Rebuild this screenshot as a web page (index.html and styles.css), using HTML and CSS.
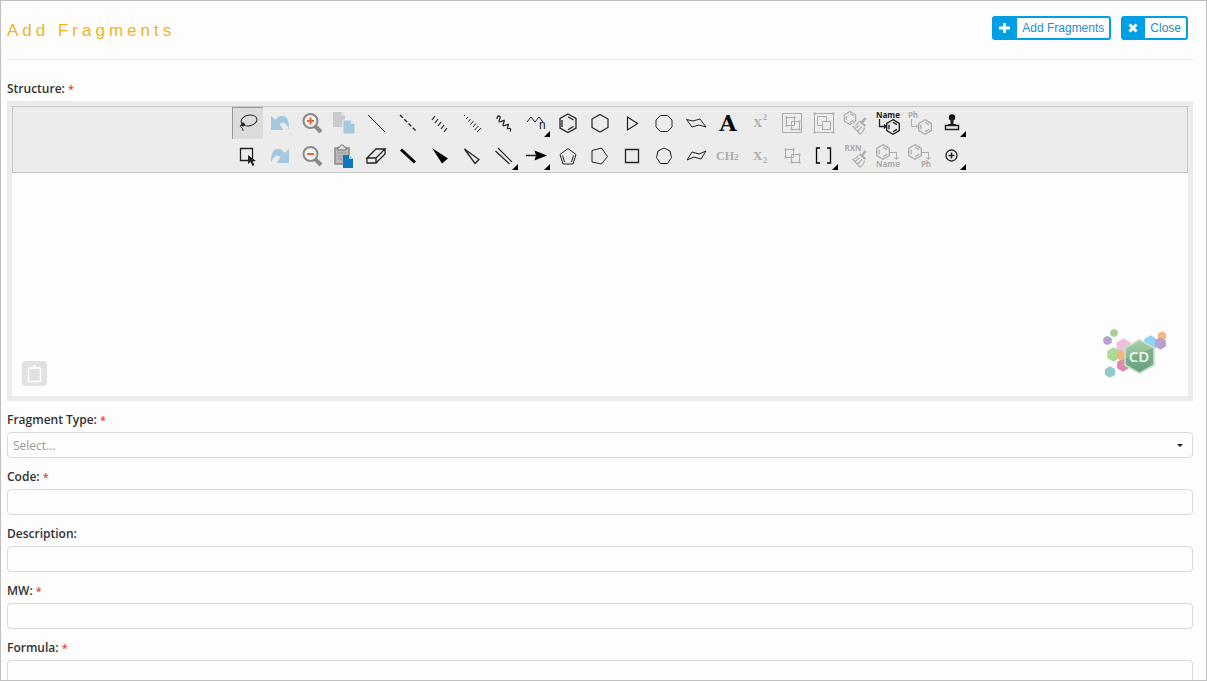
FILE: index.html
```html
<!DOCTYPE html>
<html lang="en">
<head>
<meta charset="utf-8">
<title>Add Fragments</title>
<link rel="stylesheet" href="styles.css">
</head>
<body>
<svg class="defs" aria-hidden="true">
  <symbol id="hex" viewBox="-10 -10 20 20"><path d="M0-9.6 8.3-4.8V4.8L0 9.6-8.3 4.8V-4.8Z"/></symbol>
  <symbol id="flag" viewBox="0 0 32 33"><path d="M30 24v6h-6z" fill="#000" stroke="none"/></symbol>
  <symbol id="ring" viewBox="-8 -8 16 16"><path d="M0-6.5 5.6-3.2V3.2L0 6.5-5.6 3.2V-3.2ZM0-4.2 3.6-2.1M3.6 2.1 0 4.2M-3.6-2.1V2.1" fill="none" stroke="currentColor" stroke-width="1.2"/></symbol>
  <symbol id="broom" viewBox="0 0 15 18"><path d="M13.500 1 10 5.500" stroke="currentColor" stroke-width="2.500"/><path d="M7.500 4 13.500 9" stroke="currentColor" stroke-width="2"/><path d="M6.500 5.500C5 8 3 9 .8 9.500L8 17C10.500 15.500 12 13.500 12.500 10.500M3 11.500 7.500 8M5.500 14.300 10 9.500" fill="none" stroke="currentColor" stroke-width="1.200"/></symbol>
</svg>
<main class="page">
  <header class="page-header">
    <h1 class="title">Add Fragments</h1>
    <div class="actions">
      <button class="action" type="button"><span class="action-icon"><svg width="11" height="10" viewBox="0 0 11 10"><path d="M5.500 0v10M0 5h11" stroke="#fff" stroke-width="3"/></svg></span><span class="action-text">Add Fragments</span></button>
      <button class="action" type="button"><span class="action-icon"><svg width="10" height="10" viewBox="0 0 10 10"><path d="M1.500 1.500l7 7M8.500 1.500l-7 7" stroke="#fff" stroke-width="3"/></svg></span><span class="action-text">Close</span></button>
    </div>
  </header>

  <section class="field">
    <h2 class="label">Structure: <span class="req">*</span></h2>
    <div class="editor">
      <div class="toolbar">
        <div class="tools">
          <button class="tool active" type="button" aria-label="Lasso"><svg viewBox="0 0 32 33"><ellipse cx="17" cy="13.500" rx="8" ry="5.300" transform="rotate(-12 17 13.500)"/><path d="M12 17c-2 2-4 1-4 2s3 1 3 5"/><circle cx="11" cy="17.500" r="1.500" fill="#222"/></svg></button>
          <button class="tool" type="button" aria-label="Undo"><svg viewBox="0 0 32 33"><path class="soft" d="M7 9 11.500 13C16 6 26 7 25 23 23 16 19 14 15.500 17L19.500 23H7Z"/></svg></button>
          <button class="tool" type="button" aria-label="Zoom in"><svg viewBox="0 0 32 33"><path d="M19 19l6 6" stroke="#8a8a8a" stroke-width="4"/><circle cx="14.500" cy="14" r="7" fill="#f3f3f3" stroke="#8a8a8a" stroke-width="2"/><path d="M14.500 10.500v7M11 14h7" stroke="#f26522" stroke-width="2"/></svg></button>
          <button class="tool" type="button" aria-label="Copy"><svg viewBox="0 0 32 33"><path d="M5 5h9l3 3v12H5z" fill="#c9cacc" stroke="none"/><path d="M14 5v3h3" stroke="#eee"/><path d="M15 13h8l4 4v10H15z" fill="#a4c8de" stroke="#ececec"/><path d="M23 13v4h4z" fill="#d5e6f0" stroke="none"/></svg></button>
          <button class="tool" type="button" aria-label="Single bond"><svg viewBox="0 0 32 33"><path d="M8 8l17 17"/></svg></button>
          <button class="tool" type="button" aria-label="Dashed bond"><svg viewBox="0 0 32 33"><path d="M8 8l16 16" stroke-dasharray="4 2" stroke-width="1.300"/></svg></button>
          <button class="tool" type="button" aria-label="Hashed bond"><svg viewBox="0 0 32 33"><path d="M8 13l3-4M11 16l3-4M14 19l3-4M17 22l3-4M20 25l3-4" stroke-width="1.200"/></svg></button>
          <button class="tool" type="button" aria-label="Hashed wedge"><svg viewBox="0 0 32 33"><path d="M8 9l1-1M10 12l2-2M12.500 14.500l2-2.500M14.500 17.500l3-3.500M17 20l3-3.500M18.500 23l4-4M21 25l4-4"/></svg></button>
          <button class="tool" type="button" aria-label="Wavy bond"><svg viewBox="0 0 32 33"><path d="M9 12C9 8 13 8 12 11S10 15.500 13 14.500 17 12 16 15 14 19.500 17 18.500 21 16 20 19 19 22 21 21.500 23 22.500 22 24.500" stroke-width="1.200"/></svg></button>
          <button class="tool" type="button" aria-label="Chain"><svg viewBox="0 0 32 33"><path d="M7 15l4-5 4 5 4-5 4 5"/><text x="19" y="22" class="t-chain">n</text><use href="#flag"/></svg></button>
          <button class="tool" type="button" aria-label="Benzene"><svg viewBox="0 0 32 33"><path d="M16 7l8 4.500v9.500l-8 4.500-8-4.500v-9.500ZM10 13v7M16 9.800l5.500 3.200M21.500 19.500l-5.500 3.200" stroke-width="1.300"/></svg></button>
          <button class="tool" type="button" aria-label="Cyclohexane"><svg viewBox="0 0 32 33"><path d="M16 7.500l8 4.500v8.500L16 25l-8-4.500V12Z" stroke-width="1.200"/></svg></button>
          <button class="tool" type="button" aria-label="Cyclopropane"><svg viewBox="0 0 32 33"><path d="M11.500 10v13l10-6.500Z" stroke-width="1.200"/></svg></button>
          <button class="tool" type="button" aria-label="Cyclooctane"><svg viewBox="0 0 32 33"><path d="M12.500 8.500h7l4.500 4.500v7l-4.500 4.500h-7L8 20v-7Z"/></svg></button>
          <button class="tool" type="button" aria-label="Chair left"><svg viewBox="0 0 32 33"><path d="M6.500 12.500L13 14l7-2 6 8-7-2-7 2Z"/></svg></button>
          <button class="tool" type="button" aria-label="Text"><svg viewBox="0 0 32 33"><text x="16" y="24" class="t-big">A</text></svg></button>
          <button class="tool" type="button" aria-label="Superscript" disabled><svg viewBox="0 0 32 33"><text x="9" y="20" class="t-serif">X</text><text x="19" y="13" class="t-small">2</text></svg></button>
          <button class="tool" type="button" aria-label="Group with frame" disabled><svg viewBox="0 0 32 33"><path d="M6.500 6.500h19v19h-19zM10.500 10.500h8v8h-8zM15.500 14.500h8v8h-8z"/><path class="dots" d="M10.500 10.500h0M18.500 10.500h0M10.500 18.500h0M23.500 14.500h0M15.500 22.500h0M23.500 22.500h0"/></svg></button>
          <button class="tool" type="button" aria-label="Ungroup" disabled><svg viewBox="0 0 32 33"><path d="M6.500 6.500h19v19h-19zM9.500 9.500h9v9h-9z"/><path d="M14.500 14.500h8v8h-8z" fill="#ececec"/><path class="dots" d="M6.500 6.500h0M25.500 6.500h0M6.500 25.500h0M25.500 25.500h0"/></svg></button>
          <button class="tool" type="button" aria-label="Clean structure" disabled><svg viewBox="0 0 32 33"><use href="#ring" x="2" y="3" width="16" height="16"/><use href="#broom" x="12" y="10" width="15" height="18"/></svg></button>
          <button class="tool" type="button" aria-label="Name to structure"><svg viewBox="0 0 32 33"><text x="16" y="11" class="t-word">Name</text><path d="M7.500 12v7.500h6M12 17.500l2 2-2 2" stroke-width="1.300"/><use href="#ring" x="12" y="11" width="18" height="18"/></svg></button>
          <button class="tool" type="button" aria-label="Expand label" disabled><svg viewBox="0 0 32 33"><text x="9" y="11" class="t-word">Ph</text><path d="M7.500 12v7.500h6M12 17.500l2 2-2 2"/><use href="#ring" x="12" y="11" width="18" height="18"/></svg></button>
          <button class="tool" type="button" aria-label="Stamp"><svg viewBox="0 0 32 33"><circle cx="16" cy="10.500" r="3.200" fill="#111" stroke="none"/><path d="M16 11v7" stroke-width="3"/><path d="M9.500 18.500h13v4h-13z" stroke-width="1.500"/><path d="M12 18h8" stroke-width="2"/><use href="#flag"/></svg></button>

          <button class="tool" type="button" aria-label="Rectangle select"><svg viewBox="0 0 32 33"><path d="M8.500 8.500h12v12h-12z" stroke-width="1.300"/><path d="M16 15v9l2.500-2 2 4 2-1-2-3.500 3.500-.500Z" fill="#222" stroke="none"/></svg></button>
          <button class="tool" type="button" aria-label="Redo"><svg viewBox="0 0 32 33"><path class="soft" d="M25 9 20.500 13C16 6 6 7 7 23 9 16 13 14 16.500 17L12.500 23H25Z"/></svg></button>
          <button class="tool" type="button" aria-label="Zoom out"><svg viewBox="0 0 32 33"><path d="M19 19l6 6" stroke="#8a8a8a" stroke-width="4"/><circle cx="14.500" cy="14" r="7" fill="#f3f3f3" stroke="#8a8a8a" stroke-width="2"/><path d="M11 14h7" stroke="#f26522" stroke-width="2"/></svg></button>
          <button class="tool" type="button" aria-label="Paste"><svg viewBox="0 0 32 33"><path d="M7 8h14v16H7z" fill="#b9b9b9" stroke="#888" stroke-width="1.500"/><path d="M10 7h2c0-3 4-3 4 0h2v3h-8z" fill="#ddd" stroke="#777"/><path d="M9.500 13h9M9.500 16h6M9.500 19h5" stroke="#999"/><path d="M15 15h6l4 4v9H15z" fill="#0b78bf" stroke="none"/><path d="M21 15v4h4z" fill="#9fd0ee" stroke="none"/></svg></button>
          <button class="tool" type="button" aria-label="Eraser"><svg viewBox="0 0 32 33"><path d="M7 18l9-9h9l-9 9ZM7 18v5h9v-5M16 23l9-9V9" stroke-width="1.300"/></svg></button>
          <button class="tool" type="button" aria-label="Bold bond"><svg viewBox="0 0 32 33"><path d="M9 9.500l14 13" stroke="#000" stroke-width="3"/></svg></button>
          <button class="tool" type="button" aria-label="Wedge bond"><svg viewBox="0 0 32 33"><path d="M8 8l10 15.500 6-5Z" fill="#000" stroke="none"/></svg></button>
          <button class="tool" type="button" aria-label="Hollow wedge"><svg viewBox="0 0 32 33"><path d="M8.500 9l10.500 14.500 4-4Z" stroke-width="1.300"/></svg></button>
          <button class="tool" type="button" aria-label="Double bond"><svg viewBox="0 0 32 33"><path d="M7.500 11l14 13M10 8l14 14" stroke-width="1.200"/><use href="#flag"/></svg></button>
          <button class="tool" type="button" aria-label="Arrow"><svg viewBox="0 0 32 33"><path d="M6 15.500h12" stroke-width="1.500"/><path d="M14.500 10.500 27 15.500l-12.500 5 1.500-5Z" fill="#000" stroke="none"/><use href="#flag"/></svg></button>
          <button class="tool" type="button" aria-label="Cyclopentadiene"><svg viewBox="0 0 32 33"><path d="M16 8.500l8 6-3 9.500H11L8 14.500ZM10.500 15.500l2 6.500M21.500 15.500l-2 6.500"/></svg></button>
          <button class="tool" type="button" aria-label="Cyclopentane"><svg viewBox="0 0 32 33"><path d="M8 10.500l9.500-2.500 6 8.500-6 7.500L8 22Z"/></svg></button>
          <button class="tool" type="button" aria-label="Cyclobutane"><svg viewBox="0 0 32 33"><path d="M9.500 9.500h13v13h-13z" stroke-width="1.300"/></svg></button>
          <button class="tool" type="button" aria-label="Cycloheptane"><svg viewBox="0 0 32 33"><path d="M16 8l6 3 1.500 6.500-4 6h-7l-4-6L10 11Z"/></svg></button>
          <button class="tool" type="button" aria-label="Chair right"><svg viewBox="0 0 32 33"><path d="M7 20l5-8 7 2 7-3-5 8-7-2Z"/></svg></button>
          <button class="tool" type="button" aria-label="Formula text" disabled><svg viewBox="0 0 32 33"><text x="4" y="20" class="t-formula">CH</text><text x="22" y="20" class="t-sub">2</text></svg></button>
          <button class="tool" type="button" aria-label="Subscript" disabled><svg viewBox="0 0 32 33"><text x="9" y="20" class="t-serif">X</text><text x="19" y="23" class="t-small">2</text></svg></button>
          <button class="tool" type="button" aria-label="Group" disabled><svg viewBox="0 0 32 33"><path d="M9.500 9.500h8v8h-8zM15.500 14.500h8v8h-8z"/><path class="dots" d="M9.500 9.500h0M17.500 9.500h0M9.500 17.500h0M23.500 14.500h0M15.500 22.500h0M23.500 22.500h0"/></svg></button>
          <button class="tool" type="button" aria-label="Brackets"><svg viewBox="0 0 32 33"><path d="M12 8H8.500v15H12M19 8h3.500v15H19" stroke="#000" stroke-width="1.300"/><use href="#flag"/></svg></button>
          <button class="tool" type="button" aria-label="Clean reaction" disabled><svg viewBox="0 0 32 33"><text x="13" y="11" class="t-word">RXN</text><use href="#broom" x="12" y="10" width="15" height="18"/></svg></button>
          <button class="tool" type="button" aria-label="Structure to name" disabled><svg viewBox="0 0 32 33"><use href="#ring" x="2" y="3" width="18" height="18"/><path d="M18 12.500h6.500V19M22.500 17.500l2 2 2-2"/><text x="16" y="27" class="t-word">Name</text></svg></button>
          <button class="tool" type="button" aria-label="Contract label" disabled><svg viewBox="0 0 32 33"><use href="#ring" x="2" y="3" width="18" height="18"/><path d="M18 12.500h6.500V19M22.500 17.500l2 2 2-2"/><text x="22" y="27" class="t-word">Ph</text></svg></button>
          <button class="tool" type="button" aria-label="Charge"><svg viewBox="0 0 32 33"><circle cx="15.500" cy="15.500" r="5.500" stroke-width="1.300"/><path d="M12.500 15.500h6M15.500 12.500v6" stroke-width="1.500"/><use href="#flag"/></svg></button>
        </div>
      </div>
      <div class="canvas">
        <button class="clip" type="button" aria-label="Clipboard"><svg width="25" height="25" viewBox="0 0 25 25"><path d="M6.500 7h12v13.500h-12z" fill="none" stroke="#fdfdfd" stroke-width="1.500" stroke-linejoin="round"/><path d="M9 8V6h2c0-2.500 3-2.500 3 0h2v2z" fill="#fdfdfd"/></svg></button>
        <svg class="logo" width="66" height="50" viewBox="0 0 66 50" role="img" aria-label="CD">
          <defs><linearGradient id="g" x1="0" y1="0" x2="0" y2="1"><stop offset="0" stop-color="#a5cfa6"/><stop offset="1" stop-color="#72a886"/></linearGradient></defs>
          <g stroke-linejoin="round" stroke-width="2">
          <use href="#hex" x="8" y="0" width="8" height="8" fill="#a3cf95" stroke="#a3cf95"/>
          <use href="#hex" x="1" y="7" width="9" height="9" fill="#b8a3cf" stroke="#b8a3cf"/>
          <use href="#hex" x="13" y="9" width="17" height="17" fill="#eec0d8"/>
          <use href="#hex" x="4" y="18" width="15" height="15" fill="#a9dc98"/>
          <use href="#hex" x="14" y="29" width="14" height="14" fill="#df86b3"/>
          <use href="#hex" x="14" y="21" width="11" height="11" fill="#f5b57a"/>
          <use href="#hex" x="2" y="37" width="12" height="12" fill="#92cbcb"/>
          <path d="M49 9 57 13 53 20 46 18Z" fill="#91d2f0"/>
          <use href="#hex" x="41" y="6" width="15" height="15" fill="#91d2f0"/>
          <use href="#hex" x="55" y="2" width="10" height="10" fill="#f6b880"/>
          <use href="#hex" x="52" y="8" width="13" height="13" fill="#b9a0cc"/>
          </g>
          <use href="#hex" x="19" y="9" width="37" height="37" fill="#c8dfce"/>
          <use href="#hex" x="21" y="11" width="33" height="33" fill="url(#g)"/>
          <path d="M24 30l27-11v16l-13 8-13-7z" fill="#609575" opacity=".4"/>
          <text x="37" y="33" class="t-logo">CD</text>
        </svg>
      </div>
    </div>
  </section>

  <div class="field">
    <label class="label" for="type">Fragment Type: <span class="req">*</span></label>
    <div class="select-wrap">
      <select class="control select" id="type"><option>Select...</option></select>
      <svg class="caret" width="6" height="3" viewBox="0 0 6 3"><path d="M0 0h6L3 3z" fill="#222"/></svg>
    </div>
  </div>
  <div class="field">
    <label class="label" for="code">Code: <span class="req">*</span></label>
    <input class="control" id="code" type="text">
  </div>
  <div class="field">
    <label class="label" for="description">Description:</label>
    <input class="control" id="description" type="text">
  </div>
  <div class="field">
    <label class="label" for="mw">MW: <span class="req">*</span></label>
    <input class="control" id="mw" type="text">
  </div>
  <div class="field">
    <label class="label" for="formula">Formula: <span class="req">*</span></label>
    <input class="control" id="formula" type="text">
  </div>
</main>
</body>
</html>
```
FILE: styles.css
```css
* { box-sizing: border-box; }
body {
  margin: 0;
  background: #fdfdfd;
  color: #333;
  font-family: "Open Sans", "Noto Sans", sans-serif;
  font-size: 12px;
}
button { font: inherit; padding: 0; margin: 0; cursor: pointer; }
.defs { position: absolute; width: 0; height: 0; }
.page {
  height: 100vh;
  overflow: hidden;
  border: 1px solid #bfbfbf;
  padding: 0 13px 0 6px;
}
.page-header {
  display: flex;
  justify-content: space-between;
  align-items: flex-start;
  padding: 15px 5px 18px 0;
  margin-bottom: 10px;
  border-bottom: 1px solid #e9e9e9;
}
.title {
  margin: 0;
  color: #efb41f;
  font: 400 17px/25px "Liberation Sans", Arial, sans-serif;
  letter-spacing: 4px;
  padding-top: 2px;
  height: 25px;
}
.actions { display: flex; gap: 10px; }
.action {
  display: flex;
  height: 24px;
  border: 2px solid #009fe3;
  border-radius: 3px;
  background: #fdfdfd;
  color: #1f8fd6;
  font: 12px/20px "Liberation Sans", Arial, sans-serif;
}
.action-icon {
  display: flex;
  align-items: center;
  height: 20px;
  padding: 0 7px 0 5px;
  background: #009fe3;
}
.action-text { padding: 0 5px; }

.field { display: flex; flex-direction: column; }
.label {
  margin: 0;
  padding: 10px 0 3px;
  font-size: 12px;
  line-height: 18px;
  font-weight: 600;
}
.req { color: #e8403a; font-size: 11px; }
.control {
  width: 100%;
  height: 26px;
  padding: 0 5px;
  border: 1px solid #d9d9d9;
  border-radius: 4px;
  background: #fdfdfd;
  font: inherit;
  color: #333;
}
.select-wrap { position: relative; display: flex; }
.select { appearance: none; color: #999; }
.caret { position: absolute; right: 10px; top: 12px; pointer-events: none; }

.editor { border: 5px solid #ececec; }
.toolbar {
  display: flex;
  justify-content: center;
  background: #ececec;
  border: 1px solid #c8c8c8;
}
.tools {
  display: grid;
  grid-template-columns: repeat(23, 32px);
  grid-template-rows: 33px 32px;
}
.tool {
  display: flex;
  border: 0;
  background: none;
  color: #222;
}
.tool.active {
  width: 31px;
  height: 32px;
  background: #dcdcdc;
  box-shadow: inset 1px 1px 0 #999;
}
.tool:disabled { color: #adadad; }
.tool svg {
  width: 32px;
  height: 33px;
  flex: none;
  fill: none;
  stroke: currentColor;
  stroke-width: 1;
}
.tool .soft { fill: #a4c8de; stroke: none; }
.tool .dots { stroke-width: 2; stroke-linecap: square; }
.tool text { fill: currentColor; stroke: none; }
.tool .t-big { fill: #000; }
.t-chain { font: 12px "Liberation Sans", sans-serif; }
.t-big { font: bold 22px "DejaVu Serif", serif; text-anchor: middle; }
.t-serif { font: bold 13px "Liberation Serif", serif; }
.t-formula { font: bold 12px "Liberation Serif", serif; }
.t-sub { font: bold 9px "Liberation Serif", serif; }
.t-small { font: bold 8px "Liberation Serif", serif; }
.t-word { font: bold 8px "Noto Sans", sans-serif; text-anchor: middle; }
.t-logo { font: 600 15px "Open Sans", sans-serif; fill: #f2f8f2; text-anchor: middle; }

.canvas { position: relative; height: 223px; }
.clip {
  position: absolute;
  left: 10px;
  bottom: 10px;
  width: 25px;
  height: 25px;
  border: 0;
  border-radius: 4px;
  background: #e1e1e1;
}
.clip svg { display: block; }
.logo { position: absolute; right: 20px; bottom: 17px; }
```
